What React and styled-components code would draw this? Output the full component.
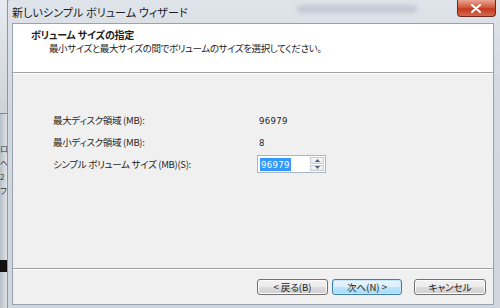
import React from "react";
import styled, { createGlobalStyle } from "styled-components";

const Global = createGlobalStyle`
  html, body {
    margin: 0;
    padding: 0;
    width: 500px;
    height: 308px;
    overflow: hidden;
    background: #c9d0d8;
  }
  * { box-sizing: border-box; }
`;

const jp = `"Noto Sans CJK JP", "Noto Sans", "Liberation Sans", sans-serif`;
const num = `"DejaVu Sans Condensed", "Liberation Sans", sans-serif`;

const Desktop = styled.div`
  display: flex;
  width: 500px;
  height: 308px;
  font-family: ${jp};
  font-feature-settings: "palt";
  color: #1e1e1e;
`;

const BackStrip = styled.div`
  width: 8px;
  display: flex;
  flex-direction: column;
  background: linear-gradient(90deg, #b9bfc6, #dfe3e7);
  border-right: 1px solid #8c96a2;
  overflow: hidden;
`;

const StripTop = styled.div`
  height: 114px;
  border-bottom: 1px solid #7c8490;
  background: linear-gradient(#e7eaee, #cdd3da);
`;

const StripChars = styled.div`
  flex: 1;
  padding: 28px 0 0 0;
  font-size: 8px;
  line-height: 14px;
  color: #333;
  white-space: pre;
`;

const StripBar = styled.div`
  height: 12px;
  background: #111;
  margin-bottom: 36px;
`;

const Win = styled.div`
  flex: 1;
  display: flex;
  flex-direction: column;
  background: linear-gradient(#dfe4ea, #d2d9e1 30%, #cfd6de);
  border-top-left-radius: 4px;
`;

const TitleBar = styled.div`
  height: 23px;
  display: flex;
  align-items: flex-start;
  justify-content: space-between;
  padding-left: 4px;
`;

const Title = styled.div`
  font-size: 11px;
  line-height: 12px;
  padding-top: 6px;
  color: #1a1a1a;
  letter-spacing: 0.1px;
`;

const Blurred = styled.div`
  margin-left: 70px;
  margin-top: 5px;
  width: 120px;
  height: 8px;
  border-radius: 4px;
  background: #c3cad3;
  filter: blur(2px);
`;

const CloseBtn = styled.div`
  width: 39px;
  height: 17px;
  margin-right: 4px;
  border: 1px solid #6b2a20;
  border-top: none;
  border-radius: 0 0 4px 4px;
  background: linear-gradient(#e9a493, #d55a3e 45%, #c13a1e 55%, #d86a4c);
  display: flex;
  align-items: center;
  justify-content: center;
`;

const Client = styled.div`
  flex: 1;
  margin: 0 6px 3px 4px;
  border: 1px solid #98a3b0;
  display: flex;
  flex-direction: column;
  background: #f0f0f0;
`;

const Header = styled.div`
  height: 49px;
  background: #fff;
  border-bottom: 1px solid #a0a0a0;
  box-shadow: 0 1px 0 #fff;
  padding: 5px 0 0 18px;
`;

const HeadTitle = styled.div`
  font-weight: bold;
  font-size: 10px;
  line-height: 12px;
  letter-spacing: -0.2px;
`;

const HeadSub = styled.div`
  font-size: 9.5px;
  line-height: 12px;
  margin-top: 1px;
  letter-spacing: -0.4px;
  padding-left: 18px;
`;

const Body = styled.div`
  flex: 1;
  padding: 36px 0 0 40px;
`;

const Form = styled.div`
  display: grid;
  grid-template-columns: 204px auto;
  grid-auto-rows: 22px;
  align-items: center;
`;

const Label = styled.div`
  font-size: 9.5px;
  letter-spacing: -0.3px;
`;

const Value = styled.div`
  font-size: 9.5px;
  padding-left: 2px;
  letter-spacing: 0.3px;
  font-family: ${num};
`;

const Spin = styled.div`
  width: 69px;
  height: 18px;
  display: flex;
  align-items: stretch;
  background: #fff;
  border: 1px solid #aab6c4;
  padding: 1px;
`;

const SpinText = styled.div`
  flex: 1;
  display: flex;
  align-items: center;
  padding-left: 1px;
`;

const Selected = styled.span`
  background: #3399ff;
  color: #fff;
  font-size: 9.5px;
  line-height: 13px;
  letter-spacing: 0.3px;
  padding: 0 1px;
  font-family: ${num};
`;

const Arrows = styled.div`
  width: 14px;
  display: flex;
  flex-direction: column;
  gap: 1px;
`;

const Arrow = styled.div`
  flex: 1;
  border: 1px solid #c6ccd4;
  background: linear-gradient(#f7f7f7, #e4e6e9);
  display: flex;
  align-items: center;
  justify-content: center;
`;

const Footer = styled.div`
  height: 36px;
  border-top: 1px solid #a0a0a0;
  box-shadow: inset 0 1px 0 #fff;
  display: flex;
  justify-content: flex-end;
  align-items: flex-start;
  padding: 10px 7px 0 0;
`;

const Button = styled.div`
  width: ${p => p.w}px;
  height: 16px;
  margin-left: ${p => p.gap}px;
  border: 1px solid ${p => (p.primary ? "#3c7fb1" : "#707070")};
  border-radius: 3px;
  background: ${p =>
    p.primary
      ? "linear-gradient(#eaf6fd, #d9f0fc 50%, #bee6fd 50%, #a7d9f5)"
      : "linear-gradient(#f2f2f2, #ebebeb 50%, #dddddd 50%, #cfcfcf)"};
  box-shadow: inset 0 0 0 1px ${p => (p.primary ? "#c8e6f8" : "#fcfcfc")};
  font-size: 9.5px;
  line-height: 14px;
  text-align: center;
  color: #1a1a1a;
`;

export default function App() {
  return (
    <>
      <Global />
      <Desktop>
        <BackStrip>
          <StripTop />
          <StripChars>{"ロ\nヘ\n2\nフ"}</StripChars>
          <StripBar />
        </BackStrip>
        <Win>
          <TitleBar>
            <Title>新しいシンプル ボリューム ウィザード</Title>
            <Blurred />
            <CloseBtn>
              <svg width="12" height="9" viewBox="0 0 12 9">
                <path d="M2 1 L10 8 M10 1 L2 8" stroke="#fff" strokeWidth="2.2" strokeLinecap="round" />
              </svg>
            </CloseBtn>
          </TitleBar>
          <Client>
            <Header>
              <HeadTitle>ボリューム サイズの指定</HeadTitle>
              <HeadSub>最小サイズと最大サイズの間でボリュームのサイズを選択してください。</HeadSub>
            </Header>
            <Body>
              <Form>
                <Label>最大ディスク領域 (MB):</Label>
                <Value>96979</Value>
                <Label>最小ディスク領域 (MB):</Label>
                <Value>8</Value>
                <Label>シンプル ボリューム サイズ (MB)(S):</Label>
                <Spin>
                  <SpinText>
                    <Selected>96979</Selected>
                  </SpinText>
                  <Arrows>
                    <Arrow>
                      <svg width="5" height="3" viewBox="0 0 5 3"><path d="M0 3 L2.5 0 L5 3Z" fill="#4d5f7a" /></svg>
                    </Arrow>
                    <Arrow>
                      <svg width="5" height="3" viewBox="0 0 5 3"><path d="M0 0 L2.5 3 L5 0Z" fill="#4d5f7a" /></svg>
                    </Arrow>
                  </Arrows>
                </Spin>
              </Form>
            </Body>
            <Footer>
              <Button w={71} gap={0}>&lt; 戻る(B)</Button>
              <Button w={70} gap={4} primary>次へ(N) &gt;</Button>
              <Button w={72} gap={12}>キャンセル</Button>
            </Footer>
          </Client>
        </Win>
      </Desktop>
    </>
  );
}
